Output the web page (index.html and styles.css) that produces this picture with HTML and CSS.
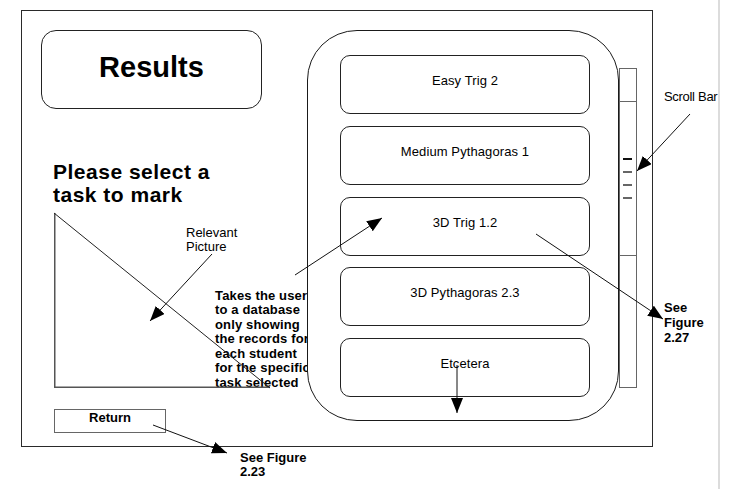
FILE: index.html
```html
<!DOCTYPE html>
<html lang="en">
<head>
<meta charset="utf-8">
<title>Results – select a task</title>
<link rel="stylesheet" href="styles.css">
</head>
<body>
<div class="canvas">
  <p class="note note-takes">Takes the user<br>to a database<br>only showing<br>the records for<br>each student<br>for the specific<br>task selected</p>

  <div class="frame">
    <div class="left-col">
      <div class="title-box"><h1 class="title">Results</h1></div>
      <h2 class="prompt">Please select a<br>task to mark</h2>
      <svg class="picture" width="216" height="175" viewBox="0 0 216 175">
        <line x1="0.75" y1="0" x2="0.75" y2="175" class="pic-edge"/>
        <line x1="0" y1="174.25" x2="216" y2="174.25" class="pic-edge"/>
        <line x1="0" y1="0" x2="216" y2="175" class="pic-diag"/>
      </svg>
      <div class="return-btn">Return</div>
    </div>
    <div class="task-panel">
      <div class="task">Easy Trig 2</div>
      <div class="task">Medium Pythagoras 1</div>
      <div class="task">3D Trig 1.2</div>
      <div class="task">3D Pythagoras 2.3</div>
      <div class="task">Etcetera</div>
    </div>
    <div class="scrollbar">
      <div class="sb-top"></div>
      <div class="sb-thumb">
        <span class="grip grip-dark"></span>
        <span class="grip"></span>
        <span class="grip"></span>
        <span class="grip"></span>
      </div>
      <div class="sb-bottom"></div>
    </div>
  </div>

  <p class="note note-relevant">Relevant<br>Picture</p>
  <p class="note note-scroll">Scroll Bar</p>
  <p class="note note-bold note-fig27">See<br>Figure<br>2.27</p>
  <p class="note note-bold note-fig23">See Figure<br>2.23</p>

  <svg class="arrows" width="729" height="489" viewBox="0 0 729 489">
    <defs>
      <marker id="head" markerUnits="userSpaceOnUse" markerWidth="16" markerHeight="12" refX="15" refY="6" orient="auto">
        <path d="M0,0 L15,6 L0,12 Z" fill="#000"/>
      </marker>
    </defs>
    <line x1="212" y1="254" x2="150" y2="321" marker-end="url(#head)"/>
    <line x1="295" y1="275" x2="382" y2="218" marker-end="url(#head)"/>
    <line x1="536" y1="234" x2="663" y2="319" marker-end="url(#head)"/>
    <line x1="457" y1="365" x2="457" y2="413" marker-end="url(#head)"/>
    <line x1="690" y1="114" x2="637" y2="171" marker-end="url(#head)"/>
    <line x1="153" y1="425" x2="227" y2="453" marker-end="url(#head)"/>
  </svg>

  <div class="page-edge"></div>
</div>
</body>
</html>
```

FILE: styles.css
```css
html, body {
  margin: 0;
  padding: 0;
  background: #fff;
}

body {
  font-family: "Liberation Sans", Arial, sans-serif;
  color: #000;
}

.canvas {
  position: relative;
  width: 729px;
  height: 489px;
  overflow: hidden;
}

/* ---- main frame ---- */
.frame {
  position: absolute;
  left: 21px;
  top: 10px;
  width: 632px;
  height: 437px;
  box-sizing: border-box;
  border: 1px solid #2a2a2a;
  display: flex;
  align-items: flex-start;
}

.left-col {
  width: 285px;
  flex: none;
  display: flex;
  flex-direction: column;
  align-items: flex-start;
}

.title-box {
  margin: 19px 0 0 19px;
  width: 221px;
  height: 79px;
  box-sizing: border-box;
  border: 1px solid #222;
  border-radius: 15px;
  padding-top: 19.5px;
  text-align: center;
}

.title {
  margin: 0;
  font-size: 29px;
  line-height: 33px;
  font-weight: bold;
}

.prompt {
  margin: 51px 0 0 31px;
  font-size: 21px;
  line-height: 23px;
  font-weight: bold;
  letter-spacing: 0.5px;
}

.picture {
  display: block;
  margin: 6.75px 0 0 32px;
  overflow: visible;
}

.pic-edge {
  stroke: #555;
  stroke-width: 1.5;
}

.pic-diag {
  stroke: #222;
  stroke-width: 1;
}

.return-btn {
  margin: 21px 0 0 32px;
  width: 112px;
  height: 24px;
  box-sizing: border-box;
  border: 1.5px solid #666;
  font-size: 13px;
  line-height: 15px;
  font-weight: bold;
  text-align: center;
  padding-top: 0.5px;
}

/* ---- task list ---- */
.task-panel {
  margin-top: 19px;
  width: 312px;
  height: 391px;
  flex: none;
  box-sizing: border-box;
  border: 1px solid #1a1a1a;
  border-radius: 50px;
  background: #fff;
  padding: 24px 0 0 32px;
  display: flex;
  flex-direction: column;
  gap: 11.75px;
}

.task {
  width: 250px;
  height: 59px;
  box-sizing: border-box;
  border: 1px solid #222;
  border-radius: 10px;
  padding-top: 17px;
  text-align: center;
  font-size: 13px;
  line-height: 15px;
  letter-spacing: 0.1px;
}

/* ---- scrollbar ---- */
.scrollbar {
  margin-top: 57px;
  width: 18px;
  height: 320px;
  flex: none;
  box-sizing: border-box;
  border: 1.5px solid #666;
  display: flex;
  flex-direction: column;
}

.sb-top {
  height: 32px;
  flex: none;
  border-bottom: 1.5px solid #666;
}

.sb-thumb {
  height: 153px;
  flex: none;
  border-bottom: 1.5px solid #666;
  display: flex;
  flex-direction: column;
  justify-content: center;
  gap: 11.5px;
  padding-left: 2.5px;
}

.grip {
  display: block;
  width: 9px;
  height: 1.5px;
  background: #666;
}

.grip-dark {
  background: #111;
}

.sb-bottom {
  flex: 1;
}

/* ---- annotations ---- */
.note {
  position: absolute;
  margin: 0;
  font-size: 13px;
  line-height: 14.5px;
  white-space: nowrap;
}

.note-bold {
  font-weight: bold;
}

.note-takes {
  left: 215px;
  top: 288.5px;
  font-weight: bold;
  line-height: 14.55px;
  letter-spacing: 0.15px;
}

.note-relevant {
  left: 186px;
  top: 225.5px;
}

.note-scroll {
  left: 664px;
  top: 88.5px;
  line-height: 15px;
  letter-spacing: -0.3px;
}

.note-fig27 {
  left: 664px;
  top: 300px;
  line-height: 15px;
}

.note-fig23 {
  left: 240px;
  top: 450.7px;
}

.arrows {
  position: absolute;
  left: 0;
  top: 0;
  pointer-events: none;
}

.arrows line {
  stroke: #111;
  stroke-width: 1;
}

.page-edge {
  position: absolute;
  left: 718px;
  top: 0;
  width: 2px;
  height: 489px;
  background: #dcdcdc;
}
```
